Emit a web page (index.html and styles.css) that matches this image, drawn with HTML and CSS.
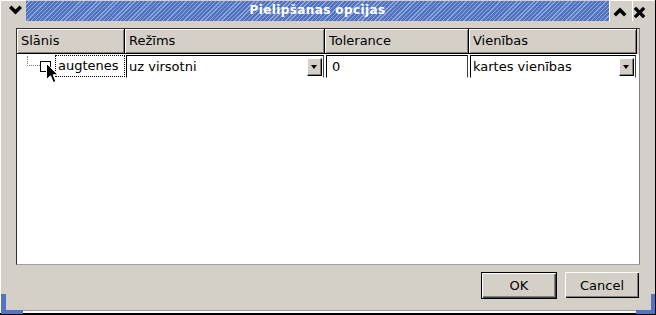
FILE: index.html
```html
<!DOCTYPE html>
<html>
<head>
    <title>Pielipšanas opcijas</title>
    <meta http-equiv="Content-Type" content="text/html;charset=utf-8"/>
    <link rel="stylesheet" href="styles.css">
</head>
<body>
<div class="window">
    <div class="titlebar">
        <div class="tbtn menu">
            <svg width="25" height="21" viewBox="0 0 25 21"><polyline points="11.5,8 15.5,12 19.5,8" fill="none" stroke="#000" stroke-width="3.5" stroke-linecap="square"/></svg>
        </div>
        <div class="title">Pielipšanas opcijas</div>
        <div class="tbtn">
            <svg width="22" height="21" viewBox="0 0 22 21"><polyline points="7,14 11,10 15,14" fill="none" stroke="#000" stroke-width="3.5" stroke-linecap="square"/></svg>
        </div>
        <div class="tbtn close">
            <svg width="23" height="21" viewBox="0 0 23 21"><path d="M4,9 L11,16 M11,9 L4,16" fill="none" stroke="#000" stroke-width="3.2" stroke-linecap="square"/></svg>
        </div>
    </div>
    <div class="content">
        <div class="table">
            <div class="thead">
                <div class="th col1">Slānis</div>
                <div class="th col2">Režīms</div>
                <div class="th col3">Tolerance</div>
                <div class="th col4">Vienības</div>
            </div>
            <div class="trow">
                <div class="td col1">
                    <div class="branch"></div>
                    <div class="check"></div>
                    <div class="label">augtenes</div>
                </div>
                <div class="td col2">
                    <div class="combo"><span class="value">uz virsotni</span><span class="drop"></span></div>
                </div>
                <div class="td col3">
                    <div class="field">0</div>
                </div>
                <div class="td col4">
                    <div class="combo"><span class="value">kartes vienības</span><span class="drop"></span></div>
                </div>
            </div>
        </div>
        <div class="buttons">
            <button class="btn default">OK</button>
            <button class="btn">Cancel</button>
        </div>
    </div>
    <div class="corner left"></div>
    <div class="corner right"></div>
    <svg class="cursor" width="13" height="21" viewBox="0 0 13 21"><polygon points="0.5,0.5 0.5,16.5 4.5,12.8 7.3,19.5 9.8,18.4 7.1,11.8 12,11.8" fill="#000" stroke="#fff" stroke-width="1"/></svg>
</div>
</body>
</html>
```

FILE: styles.css
```css
* {
    box-sizing: border-box;
}
body {
    margin: 0;
    font-family: "DejaVu Sans", Verdana, sans-serif;
    font-size: 13px;
    color: #000;
    background-color: #d4d0c8;
}
.window {
    position: relative;
    width: 656px;
    height: 315px;
    display: flex;
    flex-direction: column;
    background-color: #d4d0c8;
    border-right: 1px solid #000;
    border-bottom: 2px solid #000;
    box-shadow: inset 1px 0 0 #fff, inset 0 -2px 0 #fff, inset 0 -3px 0 #9c9a94;
}
.titlebar {
    display: flex;
    height: 21px;
}
.tbtn {
    width: 23px;
    height: 21px;
    box-shadow: inset 1px 1px 0 #fff;
}
.tbtn svg {
    display: block;
}
.menu {
    width: 26px;
}
.title {
    flex: 1;
    margin-top: 1px;
    height: 20px;
    line-height: 19px;
    text-align: center;
    color: #fff;
    font-weight: bold;
    font-size: 12px;
    letter-spacing: 0.4px;
    background: repeating-linear-gradient(135deg, #5272c0 0, #5272c0 2px, #8ea7dc 2px, #8ea7dc 3px);
}
.content {
    flex: 1;
    display: flex;
    flex-direction: column;
    padding: 7px 15px 0 16px;
}
.table {
    height: 237px;
    background-color: #fff;
    border: 1px solid;
    border-color: #303030 #808080 #a0a0a0 #303030;
}
.thead {
    display: flex;
    height: 25px;
    background-color: #d4d0c8;
}
.th {
    height: 25px;
    line-height: 23px;
    padding-left: 4px;
    border-right: 1px solid #000;
    border-bottom: 1px solid #000;
    box-shadow: inset 1px 1px 0 #fff, inset -1px -1px 0 #808080;
}
.col1 {
    width: 108px;
}
.col2 {
    width: 200px;
}
.col3 {
    width: 144px;
}
.col4 {
    width: 168px;
}
.trow {
    display: flex;
    height: 24px;
}
.td {
    display: flex;
    align-items: center;
}
.td.col1 {
    position: relative;
}
.branch {
    align-self: flex-start;
    margin: 2px 0 0 10px;
    width: 13px;
    height: 10px;
    border-left: 1px dotted #808080;
    border-bottom: 1px dotted #808080;
}
.check {
    width: 11px;
    height: 11px;
    border: 1px solid #000;
    background-color: #fff;
}
.label {
    flex: 1;
    align-self: stretch;
    margin: 1px 0 1px 4px;
    padding-left: 2px;
    line-height: 20px;
    border: 1px dotted #000;
}
.combo,
.field {
    flex: 1;
    display: flex;
    align-items: center;
    height: 23px;
    margin: 1px 1px 0 1px;
    border: 1px solid;
    border-color: #000 #404040 #fff #000;
}
.combo .value {
    flex: 1;
    padding-left: 2px;
}
.field {
    padding-left: 5px;
}
.drop {
    position: relative;
    width: 15px;
    height: 18px;
    margin-right: 1px;
    background-color: #d4d0c8;
    border: 1px solid;
    border-color: #fff #000 #000 #fff;
    box-shadow: inset -1px -1px 0 #808080;
}
.drop::after {
    content: "";
    position: absolute;
    left: 3px;
    top: 6px;
    border-left: 3.5px solid transparent;
    border-right: 3.5px solid transparent;
    border-top: 4px solid #000;
}
.buttons {
    display: flex;
    justify-content: flex-end;
    align-items: flex-start;
    gap: 8px;
    margin: 7px 1px 0 0;
}
.btn {
    font-family: "DejaVu Sans", Verdana, sans-serif;
    font-size: 13px;
    color: #000;
    width: 74px;
    height: 26px;
    padding: 0;
    background-color: #d4d0c8;
    border: none;
    box-shadow: inset 1px 1px 0 #fff, inset -1px -1px 0 #000, inset -2px -2px 0 #808080;
}
.btn.default {
    width: 76px;
    height: 27px;
    border: 1px solid #000;
    box-shadow: inset 1px 1px 0 #fff, inset -1px -1px 0 #404040, inset -2px -2px 0 #808080;
}
.corner {
    position: absolute;
    bottom: -1px;
    height: 20px;
    width: 22px;
    border-bottom: 4px solid #5473c2;
}
.corner.left {
    left: 1px;
    border-left: 5px solid #5473c2;
}
.corner.right {
    right: 0;
    width: 19px;
    border-right: 4px solid #5473c2;
}
.cursor {
    position: absolute;
    left: 46px;
    top: 63px;
}
```
